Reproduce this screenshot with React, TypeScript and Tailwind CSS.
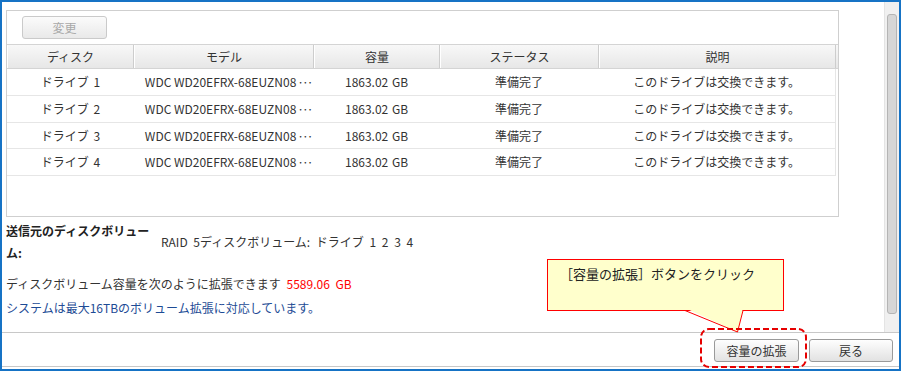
const cols = [
  { w: "w-[127px]", label: "ディスク" },
  { w: "w-[180px]", label: "モデル" },
  { w: "w-[126px]", label: "容量" },
  { w: "w-[159px]", label: "ステータス" },
  { w: "w-[237px]", label: "説明" },
];

const rowHeights = ["h-[27px]", "h-[27px]", "h-[26px]", "h-[27px]"];

export default function App() {
  return (
    <div className="relative w-[901px] h-[371px] border-2 border-[#1673c5] bg-white flex flex-col text-[12px] text-[#333] font-['Noto_Sans_CJK_JP','Noto_Sans',sans-serif] overflow-hidden">
      <div className="flex h-[331px] border-b border-[#c8c8c8]">
        <div className="flex-1 pl-[4px] pt-[8px]">
          <div className="w-[833px] h-[207px] border border-[#cfcfcf]">
            <div className="h-[33px] pl-[15px] pt-[5px]">
              <button className="w-[85px] h-[23px] rounded-[3px] border border-[#cacaca] bg-gradient-to-b from-[#fbfbfb] to-[#e9e9e9] text-[#a8a8a8] leading-[21px]">
                変更
              </button>
            </div>
            <div className="flex h-[25px] border-t border-b border-[#d4d4d4] bg-gradient-to-b from-[#f8f8f8] to-[#e7e7e7]">
              {cols.map((c) => (
                <div
                  key={c.label}
                  className={`${c.w} flex items-center justify-center border-r border-[#cdcdcd] border-l border-l-white text-[#333]`}
                >
                  {c.label}
                </div>
              ))}
            </div>
            {rowHeights.map((h, i) => (
              <div key={i} className={`flex ${h} w-[829px] border-b border-r border-[#e6e6e6]`}>
                <div className={`${cols[0].w} flex items-center justify-center [word-spacing:2px]`}>ドライブ {i + 1}</div>
                <div className={`${cols[1].w} flex items-center justify-start pl-[11px] whitespace-nowrap`}>
                  <span>WDC WD20EFRX-68EUZN08</span>
                  <span className="tracking-[-2px] ml-[1px]">···</span>
                </div>
                <div className={`${cols[2].w} flex items-center justify-center [word-spacing:1px]`}>1863.02 GB</div>
                <div className={`${cols[3].w} flex items-center justify-center`}>準備完了</div>
                <div className={`${cols[4].w} flex items-center justify-center`}>このドライブは交換できます。</div>
              </div>
            ))}
          </div>
          <div className="mt-[3px] flex items-center">
            <div className="w-[146px] font-bold leading-[22px] text-[#222]">送信元のディスクボリューム:</div>
            <div className="ml-[9px] leading-[22px] [word-spacing:3px]">RAID 5ディスクボリューム: ドライブ 1 2 3 4</div>
          </div>
          <p className="mt-[9px] leading-[22px] [word-spacing:3px]">
            ディスクボリューム容量を次のように拡張できます <span className="text-[#ff0000]">5589.06 GB</span>
          </p>
          <p className="mt-[2px] leading-[22px] text-[#1d4b95]">システムは最大16TBのボリューム拡張に対応しています。</p>
        </div>
        <div className="w-[15px] bg-[#f0f0f0] border-l border-[#e4e4e4] pt-[12px]">
          <div className="ml-[2px] w-[10px] h-[300px] rounded-[3px] bg-[#d6d6d6] border border-[#b4b4b4]" />
        </div>
      </div>
      <div className="flex h-[34px] border-b border-[#c8c8c8] justify-end items-start pt-[6px] pr-[6px] gap-[10px]">
        <button className="w-[85px] h-[23px] rounded-[3px] border border-[#9a9a9a] bg-gradient-to-b from-[#fefefe] to-[#e2e2e2] text-[#333] leading-[21px]">
          容量の拡張
        </button>
        <button className="w-[84px] h-[23px] rounded-[3px] border border-[#9a9a9a] bg-gradient-to-b from-[#fefefe] to-[#e2e2e2] text-[#333] leading-[21px]">
          戻る
        </button>
      </div>

      <div className="absolute left-[545px] top-[257px] w-[237px] h-[52px] border border-[#ff0000] bg-[#ffffcc] pl-[12px] pt-[3px] text-[13px] leading-[22px] text-[#222]">
        ［容量の拡張］ボタンをクリック
      </div>
      <svg className="absolute left-[-2px] top-[-2px] pointer-events-none" width="901" height="371" viewBox="0 0 901 371">
        <polygon points="685,308 737.5,332 743,308" fill="#ffffcc" />
        <line x1="685" y1="310.5" x2="737.5" y2="332" stroke="#ff0000" strokeWidth="1" />
        <line x1="743" y1="310.5" x2="737.5" y2="332" stroke="#ff0000" strokeWidth="1" />
        <rect x="701" y="329" width="105" height="38" rx="8" ry="8" fill="none" stroke="#e60000" strokeWidth="2" strokeDasharray="6 3" />
      </svg>
    </div>
  );
}
